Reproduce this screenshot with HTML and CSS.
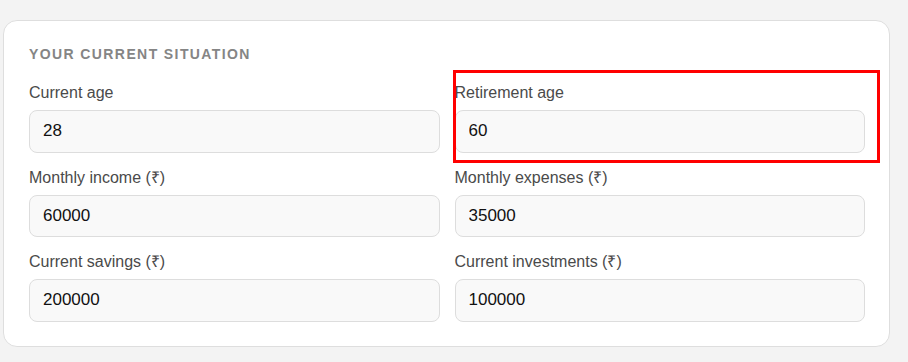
FILE: index.html
```html
<!DOCTYPE html>
<html lang="en">
<head>
  <meta charset="UTF-8" />
  <meta name="viewport" content="width=device-width, initial-scale=1.0" />
  <title>Your current situation</title>
  <link rel="stylesheet" href="styles.css">
</head>
<body>
  <div class="card">
    <h3 class="section-title">Your current situation</h3>
    <div class="fields">
      <div class="field">
        <label for="currentAge">Current age</label>
        <input type="text" id="currentAge" value="28" />
      </div>
      <div class="field">
        <label for="retireAge">Retirement age</label>
        <input type="text" id="retireAge" value="60" />
      </div>
      <div class="field">
        <label for="income">Monthly income (₹)</label>
        <input type="text" id="income" value="60000" />
      </div>
      <div class="field">
        <label for="expenses">Monthly expenses (₹)</label>
        <input type="text" id="expenses" value="35000" />
      </div>
      <div class="field">
        <label for="savings">Current savings (₹)</label>
        <input type="text" id="savings" value="200000" />
      </div>
      <div class="field">
        <label for="investments">Current investments (₹)</label>
        <input type="text" id="investments" value="100000" />
      </div>
    </div>
  </div>

  <div class="highlight"></div>
</body>
</html>
```

FILE: styles.css
```css
body {
  font-family: 'Liberation Sans', Arial, sans-serif;
  background: #f3f3f3;
  margin: 0;
  padding: 20px 18px 0 3px;
  position: relative;
}

.card {
  background: white;
  border: 1px solid #dedede;
  border-radius: 14px;
  padding: 25px 24px 24px 25px;
}

.section-title {
  margin: 0 0 22px;
  font-size: 14px;
  line-height: 16px;
  font-weight: 700;
  letter-spacing: 1.4px;
  text-transform: uppercase;
  color: #858585;
}

.fields {
  display: grid;
  grid-template-columns: 1fr 1fr;
  column-gap: 15px;
  row-gap: 16px;
}

.field {
  display: flex;
  flex-direction: column;
}

.field label {
  font-size: 16px;
  line-height: 18px;
  color: #4a4a4a;
  margin-bottom: 8px;
}

.field input {
  box-sizing: border-box;
  height: 42.5px;
  padding: 0 13px;
  font-family: inherit;
  font-size: 17px;
  color: #111;
  background: #f9f9f9;
  border: 1px solid #dddddd;
  border-radius: 8px;
  outline: none;
}

.highlight {
  position: absolute;
  left: 453px;
  top: 70px;
  width: 427px;
  height: 93px;
  box-sizing: border-box;
  border: 3px solid #ff0000;
  pointer-events: none;
}
```
